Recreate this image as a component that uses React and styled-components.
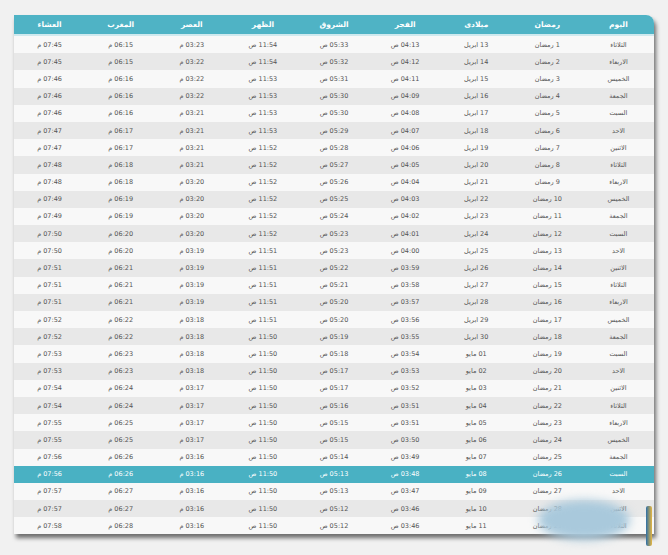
import React from "react";
import styled, { createGlobalStyle } from "styled-components";

const G = createGlobalStyle`
  html,body{margin:0;background:#f1f1f1;}
  body{font-family:"DejaVu Sans","Noto Sans",sans-serif;}
`;
const Page = styled.div`
  width:668px;height:555px;padding:15px 14px 0 14px;box-sizing:border-box;position:relative;
`;
const Table = styled.div`
  direction:rtl;width:640px;border-radius:0 8px 0 0;overflow:hidden;
  box-shadow:2px 4px 4px rgba(0,0,0,0.55);background:#fff;
`;
const Row = styled.div`
  display:grid;grid-template-columns:repeat(9,1fr);align-items:center;
  height:${p => p.$h}px;
  background:${p => p.$head ? "#4fb3c5" : p.$hi ? "#49b1c3" : p.$alt ? "#e8e8e8" : "#f8f8f8"};
  color:${p => p.$head || p.$hi ? "#fff" : "#555"};
  font-size:${p => p.$head ? 7.5 : 6.5}px;font-weight:${p => p.$head ? 700 : 400};
  border-bottom:${p => p.$head ? "2px solid #cfe9ee" : "none"};
`;
const Cell = styled.div`text-align:center;white-space:nowrap;`;
const Blob = styled.div`
  position:absolute;left:538px;top:500px;width:92px;height:40px;border-radius:50%;
  background:#a9c9dc;filter:blur(5px);
`;
const Pencil = styled.div`
  position:absolute;left:646px;top:506px;width:6px;height:40px;
  background:linear-gradient(90deg,#2d6fa8,#e6b640);border-radius:2px;
`;

const days=["الثلاثاء","الاربعاء","الخميس","الجمعة","السبت","الاحد","الاثنين"];
const fajr="04:13 04:12 04:11 04:09 04:08 04:07 04:06 04:05 04:04 04:03 04:02 04:01 04:00 03:59 03:58 03:57 03:56 03:55 03:54 03:53 03:52 03:51 03:51 03:50 03:49 03:48 03:47 03:46 03:46".split(" ");
const shur="05:33 05:32 05:31 05:30 05:30 05:29 05:28 05:27 05:26 05:25 05:24 05:23 05:23 05:22 05:21 05:20 05:20 05:19 05:18 05:17 05:17 05:16 05:15 05:15 05:14 05:13 05:13 05:12 05:12".split(" ");
const dhuhr="11:54 11:54 11:53 11:53 11:53 11:53 11:52 11:52 11:52 11:52 11:52 11:52 11:51 11:51 11:51 11:51 11:51 11:50 11:50 11:50 11:50 11:50 11:50 11:50 11:50 11:50 11:50 11:50 11:50".split(" ");
const asr="03:23 03:22 03:22 03:22 03:21 03:21 03:21 03:21 03:20 03:20 03:20 03:20 03:19 03:19 03:19 03:19 03:18 03:18 03:18 03:18 03:17 03:17 03:17 03:17 03:16 03:16 03:16 03:16 03:16".split(" ");
const magh="06:15 06:15 06:16 06:16 06:16 06:17 06:17 06:18 06:18 06:19 06:19 06:20 06:20 06:21 06:21 06:21 06:22 06:22 06:23 06:23 06:24 06:24 06:25 06:25 06:26 06:26 06:27 06:27 06:28".split(" ");
const isha="07:45 07:45 07:46 07:46 07:46 07:47 07:47 07:48 07:48 07:49 07:49 07:50 07:50 07:51 07:51 07:51 07:52 07:52 07:53 07:53 07:54 07:54 07:55 07:55 07:56 07:56 07:57 07:57 07:58".split(" ");
const head=["اليوم","رمضان","ميلادى","الفجر","الشروق","الظهر","العصر","المغرب","العشاء"];

export default function App(){
  const rows=fajr.map((_,i)=>{
    const n=i+1;
    const g=n<=18?`${12+n} ابريل`:`${String(n-18).padStart(2,"0")} مايو`;
    return [days[i%7],`${n} رمضان`,g,`${fajr[i]} ص`,`${shur[i]} ص`,`${dhuhr[i]} ص`,`${asr[i]} م`,`${magh[i]} م`,`${isha[i]} م`];
  });
  return (<Page><G/>
    <Table>
      <Row $head $h={19}>{head.map(h=><Cell key={h}>{h}</Cell>)}</Row>
      {rows.map((r,i)=>(
        <Row key={i} $h={17.2} $alt={i%2===1} $hi={i===25}>
          {r.map((c,j)=><Cell key={j}>{c}</Cell>)}
        </Row>
      ))}
    </Table>
    <Blob/><Pencil/>
  </Page>);
}
